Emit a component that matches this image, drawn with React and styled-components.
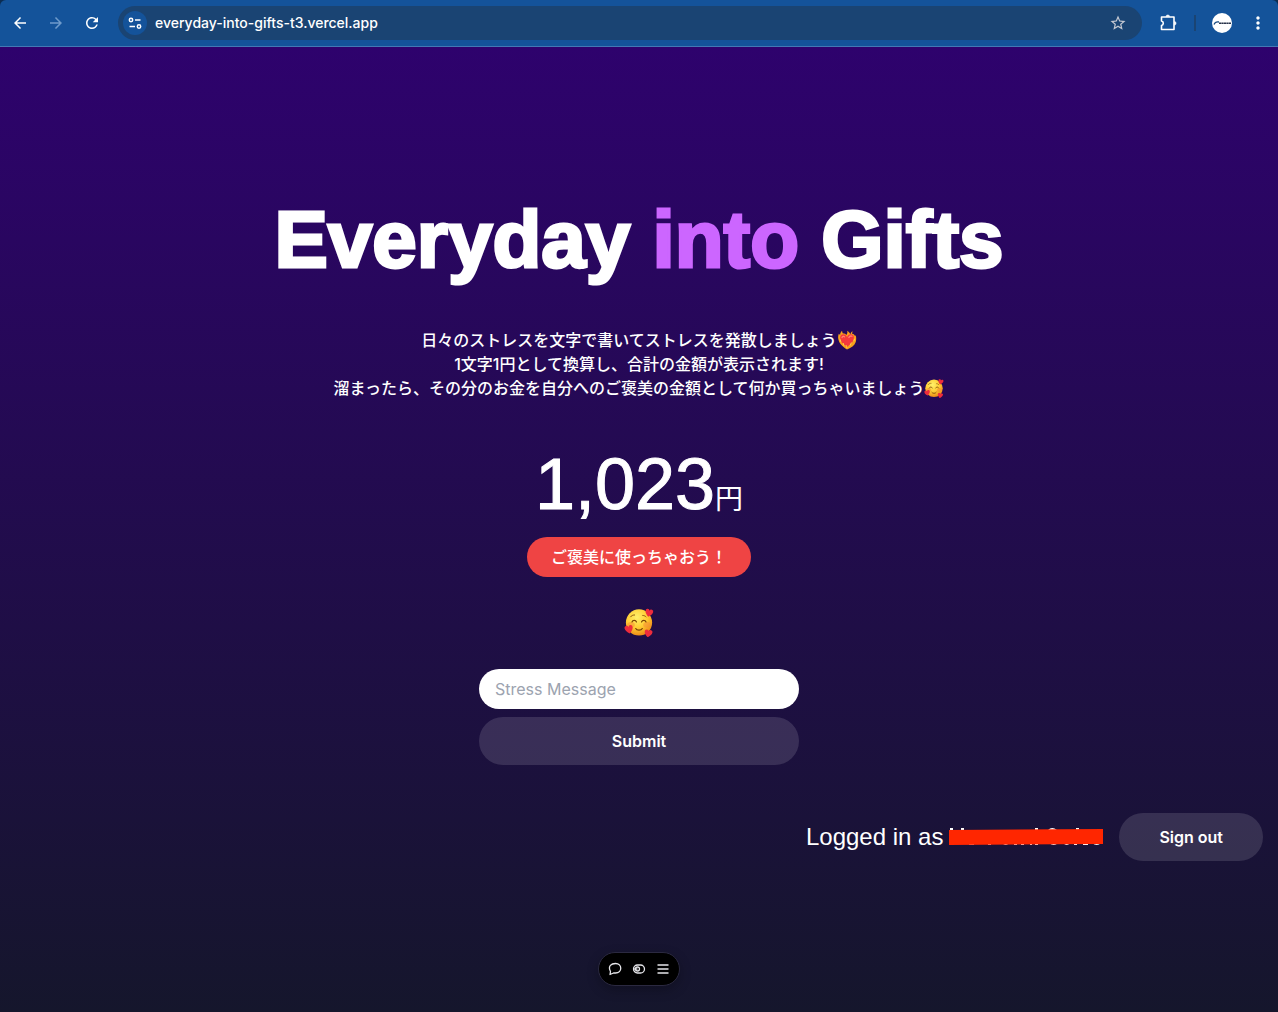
import React from 'react';
import styled, { createGlobalStyle } from 'styled-components';
//browser bar
import {
	MdArrowBack,
	MdArrowForward,
	MdRefresh,
	MdStarBorder,
	MdMoreVert,
} from 'react-icons/md';

const GlobalStyle = createGlobalStyle`
	* {
		box-sizing: border-box;
	}
	body {
		margin: 0;
		background: #0c2d52;
		font-family: Inter, 'Noto Sans CJK JP', sans-serif;
		font-size: 16px;
		line-height: 24px;
	}
	h1, p, form {
		margin: 0;
	}
	button, input {
		font: inherit;
		border: none;
	}
	button {
		cursor: pointer;
	}
	svg {
		display: block;
	}
`;

const Page = styled.div`
	display: flex;
	flex-direction: column;
	min-height: 100vh;
`;

const BrowserBar = styled.header`
	display: flex;
	align-items: center;
	height: 47px;
	padding: 0 10px 0 2px;
	background: #14539a;
	border-bottom: 1px solid #4378b4;
	border-radius: 6px 6px 0 0;
	color: #ffffff;
`;

const BarButton = styled.button`
	display: flex;
	align-items: center;
	justify-content: center;
	flex: none;
	width: ${({ $width }) => $width || 36}px;
	height: 34px;
	padding: 0;
	background: transparent;
	color: ${({ $color }) => $color || '#ffffff'};
`;

const NavButtons = styled.nav`
	display: flex;
	margin-right: 8px;
`;

const AddressBar = styled.div`
	display: flex;
	align-items: center;
	flex: 1;
	height: 34px;
	padding: 0 6px 0 5px;
	border-radius: 17px;
	background: #1a4473;
`;

const SiteButton = styled(BarButton)`
	height: 24px;
	border-radius: 50%;
	background: #14539a;
`;

const Url = styled.input`
	flex: 1;
	min-width: 0;
	padding: 0 8px;
	background: transparent;
	color: #ffffff;
	font-size: 14px;
	font-weight: 500;
	outline: none;
`;

const Divider = styled.span`
	width: 2px;
	height: 16px;
	background: #1a4473;
`;

const Main = styled.main`
	display: flex;
	flex-direction: column;
	align-items: center;
	justify-content: center;
	flex: 1;
	background: linear-gradient(#2e026d, #15162c);
	color: #ffffff;
`;

const Container = styled.div`
	display: flex;
	flex-direction: column;
	align-items: center;
	gap: 48px;
	width: 100%;
	padding: 66px 15px 64px;
`;

const Title = styled.h1`
	font-family: 'Liberation Sans', Arial, sans-serif;
	font-size: 80px;
	line-height: 80px;
	font-weight: 800;
	text-align: center;
	-webkit-text-stroke: 3px currentColor;

	span {
		color: #cc66ff;
	}
`;

const Description = styled.p`
	font-weight: 500;
	text-align: center;
`;

const Center = styled.div`
	display: flex;
	flex-direction: column;
	align-items: center;
`;

const Amount = styled.p`
	font-family: 'Liberation Sans', 'Noto Sans CJK JP', sans-serif;
	font-size: 72px;
	line-height: 72px;
	margin-bottom: 17px;
	-webkit-text-stroke: 1px currentColor;

	span {
		font-size: 28px;
		line-height: 28px;
		-webkit-text-stroke: 0;
	}
`;

const UseButton = styled.button`
	height: 40px;
	padding: 0 24px;
	border-radius: 20px;
	background: #ef4444;
	color: #ffffff;
	font-weight: 500;
`;

const Face = styled.div`
	display: flex;
	padding: 30px 0 32px;
`;

const Form = styled.form`
	display: flex;
	flex-direction: column;
	gap: 8px;
	width: 320px;
`;

const MessageInput = styled.input`
	height: 40px;
	padding: 0 16px;
	border-radius: 20px;
	background: #ffffff;
	color: #000000;

	&::placeholder {
		color: #9ca3af;
	}
`;

const PillButton = styled.button`
	height: 48px;
	padding: 0 40px;
	border-radius: 24px;
	background: rgba(255, 255, 255, 0.13);
	color: #ffffff;
	font-weight: 600;
`;

const Account = styled.div`
	display: flex;
	align-items: center;
	align-self: flex-end;
	gap: 16px;
`;

const LoggedIn = styled.p`
	display: flex;
	align-items: center;
	gap: 6px;
	font-family: 'Liberation Sans', Arial, sans-serif;
	font-size: 24px;
	line-height: 32px;
`;

const Toolbar = styled.div`
	position: fixed;
	bottom: 26px;
	left: 50%;
	transform: translateX(-50%);
	display: flex;
	align-items: center;
	justify-content: center;
	height: 34px;
	padding: 0 4px;
	border: 1px solid #2b2940;
	border-radius: 17px;
	background: #000000;
	box-shadow: 0 4px 12px rgba(0, 0, 0, 0.25);
`;

const ToolButton = styled(BarButton)`
	width: 24px;
	height: 32px;
	color: #e6e6ea;
`;

const InlineIcon = styled.svg`
	display: inline-block;
	flex: none;
	vertical-align: -4px;
`;

const HEART = 'M16 28C9 22 4 17 4 11a6 6 0 0 1 12-2 6 6 0 0 1 12 2c0 6-5 11-12 17z';

const SmilingFace = ({ size }) => (
	<InlineIcon width={size} height={size} viewBox='0 0 32 32' role='img' aria-label='Smiling face with hearts'>
		<defs>
			<radialGradient id={`face${size}`} cx='42%' cy='30%' r='70%'>
				<stop offset='0' stopColor='#fff06a' />
				<stop offset='0.55' stopColor='#ffce35' />
				<stop offset='1' stopColor='#ed8c16' />
			</radialGradient>
		</defs>
		<circle cx='16' cy='16.5' r='14' fill={`url(#face${size})`} />
		<ellipse cx='7.5' cy='19' rx='4' ry='3' fill='#f58a35' opacity='0.5' />
		<ellipse cx='24.5' cy='19' rx='4' ry='3' fill='#f58a35' opacity='0.5' />
		<g fill='none' stroke='#7a4306' strokeLinecap='round'>
			<path d='M8.5 16c.8-2.3 4-2.3 4.8 0M18.7 16c.8-2.3 4-2.3 4.8 0' strokeWidth='1.2' />
			<path d='M12.5 23c1.2 2.2 5.8 2.2 7 0' strokeWidth='1.3' />
			<path d='M7 10.5c1-1.4 2.5-2 4.3-2M20 9c1.5 0 2.6.6 3.5 1.5' strokeWidth='.9' />
		</g>
		<g fill='#ee2c3c'>
			<path d={HEART} transform='translate(22.5 0) rotate(12) scale(.34)' />
			<path d={HEART} transform='translate(-1.5 19.5) rotate(-12) scale(.36)' />
			<path d={HEART} transform='translate(21.5 22) rotate(10) scale(.34)' />
		</g>
	</InlineIcon>
);

const BurningHeart = () => (
	<InlineIcon width='20' height='20' viewBox='0 0 32 32' role='img' aria-label='Heart on fire'>
		<path
			d='M16 31C9 27 3 21 2 14c-.5-3 0-6 1-8l2 2c0-3 1-5 3-7l1 4 4 1 2 2c2-3 2-5 1-7 4 2 5 4 5 6 1-2 2-4 4-5l-1 4c3 0 4 2 5 4l1-2c1 4 1 8 0 11-2 6-7 9-14 12z'
			fill='#f9a11b'
		/>
		<path d='M16 27C9 22 5 18 5 12c0-6 8-7 11-1 3-6 11-5 11 1 0 6-4 10-11 15z' fill='#f5393c' />
		<path d='M8 12c1-2 3-2 4-1M19 12c1-2 3-3 5-2' fill='none' stroke='#ff8770' strokeWidth='2' strokeLinecap='round' />
		<path d='M16 29c-1-2 0-3-2-5M11 25l-1-4M21 25l2-5M6 19l-1-4M27 18l1-4' stroke='#ffd24a' strokeWidth='1.6' fill='none' />
	</InlineIcon>
);

const TuneIcon = () => (
	<svg width='14' height='14' viewBox='0 0 14 14' fill='none' stroke='#fff' strokeWidth='1.5'>
		<circle cx='3' cy='4' r='1.7' />
		<path d='M7 4h5.5M1.5 10.5H7' />
		<circle cx='11' cy='10.5' r='1.7' />
	</svg>
);

const ExtensionIcon = () => (
	<svg width='20' height='20' viewBox='0 0 20 20' fill='none' stroke='#fff' strokeWidth='1.6' strokeLinejoin='round'>
		<path d='M3.5 4h12.500v12.500H3.500v-4c2.400-.6 2.400-3.900 0-4.500z' />
		<path d='M8 3.500a1.800 1.500 0 0 1 3.600 0zM16.500 8.500a1.500 1.800 0 0 1 0 3.600z' fill='#fff' strokeWidth='.6' />
	</svg>
);

const ProfileIcon = () => (
	<svg width='20' height='20' viewBox='0 0 20 20'>
		<circle cx='10' cy='10' r='10' fill='#fff' />
		<path d='M2 11.5c1-2.5 2.5-3 5-2.500' fill='none' stroke='#1d4d83' strokeWidth='1.3' />
		<path d='M7 10.3h12' stroke='#29344b' strokeWidth='1.6' strokeDasharray='2.2 .3' />
	</svg>
);

// the user name stays hidden behind the red bar, only its edges show
const HiddenName = () => (
	<svg width='154' height='20' viewBox='0 0 154 20' role='img' aria-label='Hidden name'>
		<path d='M1 1h3v3H1zM12 1h3v3h-3zM86 1h3v3h-3zM99 3q4-4 9 0zM127 1h3v3h-3z' fill='#fff' />
		<path
			d='M20 16h5v2h-5zM39 16h3v2h-3zM53 16h7q-3 4-7 0zM65 16h3v2h-3zM72 16h3v2h-3zM81 16h2v2h-2zM86 16h3v2h-3zM100 16h9q-4 4-9 0zM114 16h7q-3 4-7 0zM125 16h3v2h-3zM134 16h5v2h-5zM143 16h9q-4 4-9 0z'
			fill='#fff'
		/>
		<path d='M0 3L154 2V17L0 18z' fill='#ff2600' />
	</svg>
);

const App = () => {
	return (
		<>
			<GlobalStyle />
			<Page>
				<BrowserBar>
					<NavButtons>
						<BarButton aria-label='Back'>
							<MdArrowBack size={18} />
						</BarButton>
						<BarButton aria-label='Forward' $color='#6f9bcb'>
							<MdArrowForward size={18} />
						</BarButton>
						<BarButton aria-label='Reload'>
							<MdRefresh size={18} />
						</BarButton>
					</NavButtons>
					<AddressBar>
						<SiteButton aria-label='Site information' $width={24}>
							<TuneIcon />
						</SiteButton>
						<Url aria-label='Address' defaultValue='everyday-into-gifts-t3.vercel.app' />
						<BarButton aria-label='Bookmark' $color='#c5c9d2'>
							<MdStarBorder size={18} />
						</BarButton>
					</AddressBar>
					<BarButton aria-label='Extensions' $width={52}>
						<ExtensionIcon />
					</BarButton>
					<Divider />
					<BarButton aria-label='Profile' $width={52}>
						<ProfileIcon />
					</BarButton>
					<BarButton aria-label='Menu' $width={20}>
						<MdMoreVert size={20} />
					</BarButton>
				</BrowserBar>
				<Main>
					<Container>
						<Title>
							Everyday <span>into</span> Gifts
						</Title>
						<Description>
							日々のストレスを文字で書いてストレスを発散しましょう
							<BurningHeart />
							<br />
							1文字1円として換算し、合計の金額が表示されます!
							<br />
							溜まったら、その分のお金を自分へのご褒美の金額として何か買っちゃいましょう
							<SmilingFace size={20} />
						</Description>
						<Center>
							<Amount>
								1,023<span>円</span>
							</Amount>
							<UseButton>ご褒美に使っちゃおう！</UseButton>
							<Face>
								<SmilingFace size={30} />
							</Face>
							<Form onSubmit={(e) => e.preventDefault()}>
								<MessageInput type='text' aria-label='Stress Message' placeholder='Stress Message' />
								<PillButton type='submit'>Submit</PillButton>
							</Form>
						</Center>
						<Account>
							<LoggedIn>
								Logged in as <HiddenName />
							</LoggedIn>
							<PillButton>Sign out</PillButton>
						</Account>
					</Container>
				</Main>
				<Toolbar>
					<ToolButton aria-label='Comment'>
						<svg width='14' height='14' viewBox='0 0 14 14' fill='none' stroke='currentColor' strokeWidth='1.3'>
							<path d='M2 12.5l.5-3C-.5 4 3.5 1.5 7.5 1.5c7 0 7 9.500 0 9.500H5.500z' strokeLinejoin='round' />
						</svg>
					</ToolButton>
					<ToolButton aria-label='Preview'>
						<svg width='14' height='14' viewBox='0 0 14 14' fill='none' stroke='currentColor' strokeWidth='1.3'>
							<rect x='1.5' y='3' width='11' height='8' rx='4' />
							<circle cx='5.5' cy='7' r='2' />
							<path d='M1 7h4.5' />
						</svg>
					</ToolButton>
					<ToolButton aria-label='Toolbar menu'>
						<svg width='14' height='14' viewBox='0 0 14 14' stroke='currentColor' strokeWidth='1.3'>
							<path d='M1.5 3h11M1.5 7h11M1.5 11h11' />
						</svg>
					</ToolButton>
				</Toolbar>
			</Page>
		</>
	);
};

export default App;
